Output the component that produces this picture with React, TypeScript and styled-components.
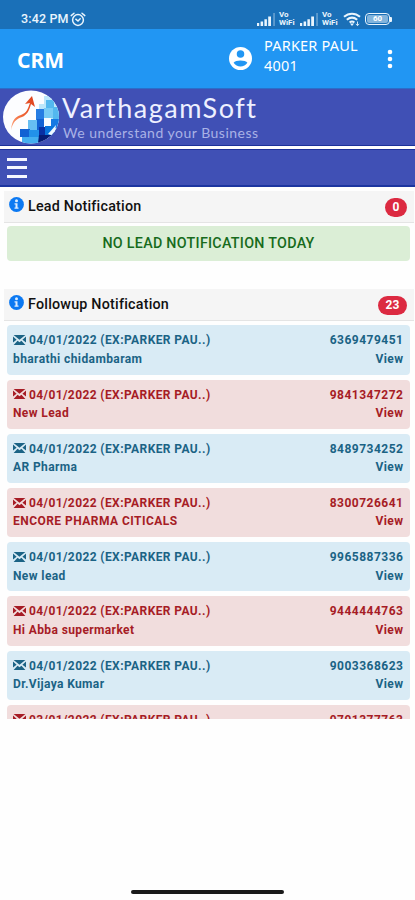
import React from "react";
import styled, { createGlobalStyle } from "styled-components";

const GlobalStyle = createGlobalStyle`
  * { box-sizing: border-box; }
  html, body { margin: 0; padding: 0; background: #fefefe; }
  body { font-family: Roboto, "Liberation Sans", sans-serif; overflow: hidden; }
  svg { display: block; flex: none; }
`;

const Screen = styled.div`
  width: 415px;
  height: 900px;
  display: flex;
  flex-direction: column;
  overflow: hidden;
  background: #fefefe;
`;

const StatusBar = styled.header`
  height: 29px;
  flex: none;
  display: flex;
  align-items: center;
  justify-content: space-between;
  padding: 9px 23px 0 21px;
  background: #1a70b8;
  color: #eaf5fd;
`;

const StatusGroup = styled.div<{ $gap: number }>`
  display: flex;
  align-items: center;
  gap: ${(p) => p.$gap}px;
`;

const Clock = styled.span`
  font: 500 12.5px/16px Roboto, sans-serif;
  letter-spacing: 0.15px;
`;

const Carrier = styled.span`
  display: flex;
  flex-direction: column;
  width: 18px;
  font: 700 8px/8px Roboto, sans-serif;
`;

const AppBar = styled.div`
  height: 60px;
  flex: none;
  display: flex;
  align-items: center;
  padding: 0 22px 0 17px;
  background: #2196f3;
  border-bottom: 1px solid #2a6ecb;
  color: #fff;
`;

const AppTitle = styled.h1`
  margin: 2px 0 0;
  flex: 1;
  font: 700 21px/28px "Noto Sans", sans-serif;
  letter-spacing: 0;
`;

const Account = styled.div`
  width: 119px;
  margin: 0 4px 8px 12px;
  font: 400 14.5px/20px "Noto Sans", sans-serif;
  white-space: nowrap;
`;

const AccountLine = styled.div`
  letter-spacing: 0.2px;
`;

const Brand = styled.div`
  height: 57px;
  flex: none;
  display: flex;
  align-items: center;
  padding-left: 2px;
  background: #4050b5;
  border-bottom: 1px solid #1c319a;
`;

const BrandText = styled.div`
  display: flex;
  flex-direction: column;
  margin-left: 2px;
  font-family: Lato, sans-serif;
  white-space: nowrap;
`;

const BrandName = styled.span`
  font-size: 27px;
  line-height: 32px;
  letter-spacing: 1.5px;
  color: #eef0ff;
`;

const Tagline = styled.span`
  margin-left: 1px;
  font-size: 14px;
  line-height: 18px;
  letter-spacing: 0.5px;
  color: #a9b2e6;
`;

const MenuBar = styled.nav`
  height: 38px;
  flex: none;
  margin-top: 3px;
  display: flex;
  align-items: center;
  padding-left: 7px;
  background: #4050b5;
  border-top: 1px solid #1c319a;
  border-bottom: 2px solid #1c35a0;
`;

const MenuButton = styled.button`
  width: 20px;
  height: 20px;
  padding: 0;
  border: 0;
  background: none;
  display: flex;
  flex-direction: column;
  justify-content: space-between;
`;

const MenuStroke = styled.span`
  height: 3px;
  background: #f5f7ff;
`;

const PanelHead = styled.div<{ $top: number; $height: number }>`
  height: ${(p) => p.$height}px;
  flex: none;
  margin: ${(p) => p.$top}px 1px 0 4px;
  display: flex;
  align-items: center;
  padding: 0 7px 0 5px;
  background: #f5f5f5;
  border-bottom: 1px solid #e4e4e4;
`;

const PanelTitle = styled.h2`
  flex: 1;
  margin: 0 0 1px 4px;
  font: 500 14.3px/20px Roboto, sans-serif;
  letter-spacing: 0.22px;
  color: #111;
`;

const InfoSlot = styled.span`
  margin-bottom: 4px;
`;

const Count = styled.span<{ $width: number }>`
  width: ${(p) => p.$width}px;
  height: 19px;
  margin-top: 1px;
  border-radius: 10px;
  background: #dc2a41;
  color: #fff;
  text-align: center;
  font: 700 12px/19px Roboto, sans-serif;
`;

const EmptyNotice = styled.div`
  height: 35px;
  flex: none;
  margin: 3px 5px 0 7px;
  border-radius: 4px;
  background: #dbeed6;
  color: #176b1c;
  text-align: center;
  font: 500 14.3px/34px Roboto, sans-serif;
  letter-spacing: 0.28px;
`;

const List = styled.main`
  height: 398px;
  flex: none;
  overflow: hidden;
  padding: 4.4px 5px 0 7px;
  display: flex;
  flex-direction: column;
  gap: 4.9px;
`;

const Card = styled.article<{ $tone: "blue" | "red" }>`
  height: 49.3px;
  flex: none;
  padding: 6px 7px 0 6px;
  border-radius: 4px;
  background: ${(p) => (p.$tone === "blue" ? "#d9ebf5" : "#f1dddd")};
  color: ${(p) => (p.$tone === "blue" ? "#1b6385" : "#a61c25")};
  font: 700 12px/18.4px Roboto, sans-serif;
`;

const CardRow = styled.div`
  display: flex;
  align-items: center;
  white-space: nowrap;
`;

const EnvelopeSlot = styled.span`
  margin-bottom: 1px;
`;

const DateText = styled.span`
  margin-left: 3px;
  flex: 1;
  letter-spacing: 0.4px;
`;

const LeadName = styled.span<{ $spacing: number }>`
  flex: 1;
  letter-spacing: ${(p) => p.$spacing}px;
`;

const Phone = styled.span`
  letter-spacing: 0.5px;
  margin-right: -0.5px;
`;

const ViewLink = styled.a`
  letter-spacing: 0.4px;
  margin-right: -0.4px;
`;

const Footer = styled.footer`
  flex: 1;
  display: flex;
  align-items: flex-end;
  justify-content: center;
  padding-bottom: 6px;
`;

const HomeHandle = styled.div`
  width: 153px;
  height: 4px;
  border-radius: 2px;
  background: #1a1a1a;
`;

const AlarmIcon = () => (
  <svg width="16" height="15" viewBox="0 0 16 15" fill="none" stroke="currentColor" strokeWidth="1.5" strokeLinecap="round">
    <circle cx="8" cy="8" r="5.4" />
    <path d="M1.2 3.6 4 1.2M14.8 3.6 12 1.2M5.8 7.2 8 9l2.2-2.2" />
  </svg>
);

const SignalIcon = () => (
  <svg width="19" height="13" viewBox="0 0 19 13" fill="currentColor">
    <path d="M0 10h2.2v3H0zM3.6 8.5h2.5V13H3.6zM7.4 6.2h2.5V13H7.4zM11.2 3.5h2.8V13h-2.8z" />
    <path d="M16.3 0h1.5v13h-1.5z" opacity=".4" />
  </svg>
);

const WifiIcon = () => (
  <svg width="18" height="14" viewBox="0 0 18 14" fill="none" stroke="currentColor" strokeWidth="2">
    <path d="M1 4.8c4.8-4.2 11.2-4.2 16 0M3.8 7.8c3.2-2.7 7.2-2.7 10.4 0M6.6 10.5c1.5-1.2 3.3-1.2 4.8 0" />
    <path d="m9 14-2-2.4h4z" fill="currentColor" stroke="none" />
    <path d="M14.5 9.5v4M12.8 12l1.7 1.5 1.7-1.5" strokeWidth=".9" />
  </svg>
);

const Battery = styled.span`
  display: flex;
  align-items: center;
  margin-left: 1px;
  &::after {
    content: "";
    width: 2px;
    height: 5px;
    background: #eaf5fd;
    border-radius: 0 1px 1px 0;
  }
`;

const BatteryCell = styled.span`
  width: 25px;
  height: 12px;
  border: 1.5px solid #eaf5fd;
  border-radius: 4px;
  padding: 1px;
  display: flex;
`;

const BatteryLevel = styled.span`
  flex: 1;
  border-radius: 2px;
  background: #82b4dc;
  color: #fff;
  font: 700 8px/8px Roboto, sans-serif;
  text-align: center;
`;

const ProfileIcon = () => (
  <svg width="23" height="23" viewBox="0 0 24 24">
    <circle cx="12" cy="12" r="12" fill="#fff" />
    <circle cx="12" cy="7.4" r="3.9" fill="#2196f3" />
    <path d="M4.8 16.4C6.8 13.4 17.2 13.4 19.2 16.4 16.2 21.5 7.8 21.5 4.8 16.4z" fill="#2196f3" />
  </svg>
);

const MoreIcon = () => (
  <svg width="6" height="20" viewBox="0 0 6 20" fill="#fff">
    <circle cx="3" cy="3" r="2.3" />
    <circle cx="3" cy="10" r="2.3" />
    <circle cx="3" cy="17" r="2.3" />
  </svg>
);

const InfoIcon = () => (
  <svg width="15" height="15" viewBox="0 0 15 15">
    <circle cx="7.5" cy="7.5" r="7.4" fill="#0c79f2" />
    <circle cx="7.5" cy="3.8" r="1.5" fill="#dcecff" />
    <path d="M5.5 6.2h3v4.3h1v1.3h-4v-1.3h1V7.5h-1z" fill="#dcecff" />
  </svg>
);

const EnvelopeIcon = () => (
  <svg width="13" height="10" viewBox="0 0 13 10">
    <path d="M.6 0h11.8L6.5 4.8zM0 1.4 3.6 4.7 0 7.6zM13 1.4 9.4 4.7 13 7.6zM.6 10l4-4.3 1.9 1.6 1.9-1.6 4 4.3z" fill="currentColor" />
  </svg>
);

const GlobeLogo = () => (
  <svg width="58" height="54" viewBox="0 0 58 54">
    <defs>
      <clipPath id="globe"><ellipse cx="29" cy="27" rx="28" ry="26.5" /></clipPath>
      <linearGradient id="arrow" x1="0" y1="1" x2="1" y2="0">
        <stop offset="0" stopColor="#ffac86" />
        <stop offset=".45" stopColor="#ef6535" />
        <stop offset="1" stopColor="#dc3e1a" />
      </linearGradient>
    </defs>
    <g clipPath="url(#globe)">
      <path d="M0 0h58v54H0z" fill="#fcfdff" />
      <path d="M42 6h16v48H45V30h-8V14h5z" fill="#bce7fb" />
      <path d="M44 10h8v9h-8zM51 17h7v14h-7z" fill="#53b8ef" />
      <path d="M34 19h9v12h-9z" fill="#267de3" />
      <path d="M42 18h9v10h-9z" fill="#77cbf5" />
      <path d="M26 30h9v11h-9z" fill="#66bef2" />
      <path d="M35 29h7v11h-7zM18 39h10v8H18z" fill="#1262d3" />
      <path d="M42 28h7v9h-7z" fill="#f7fcff" />
      <path d="M49 29h8v9h-8z" fill="#157ae3" />
      <path d="M27 40h10v9H27z" fill="#2291e9" />
      <path d="M37 37h7v9h-7z" fill="#0830a4" />
      <path d="M43 36h9v10h-9z" fill="#0874dc" />
      <path d="M46 44 54 35l-2 11z" fill="#eef9ff" />
      <path d="M20 47h9v8h-9zM29 47h8v7h-8z" fill="#44aff0" />
      <path d="M37 45h15l-8 8h-8z" fill="#061c75" />
      <path d="M9 40C10 30 13 27 19 25c6-2 7-7 9-12l-5 1 7-8 3 11-4-3c-2 7-4 11-9 13-6 2-9 5-11 13z" fill="url(#arrow)" />
    </g>
  </svg>
);

const leads: { name: string; phone: string; spacing: number; date?: string }[] = [
  { name: "bharathi chidambaram", phone: "6369479451", spacing: 0.4 },
  { name: "New Lead", phone: "9841347272", spacing: 0.4 },
  { name: "AR Pharma", phone: "8489734252", spacing: 0.4 },
  { name: "ENCORE PHARMA CITICALS", phone: "8300726641", spacing: 0.46 },
  { name: "New lead", phone: "9965887336", spacing: 0.4 },
  { name: "Hi Abba supermarket", phone: "9444444763", spacing: 0.38 },
  { name: "Dr.Vijaya Kumar", phone: "9003368623", spacing: 0.36 },
  { name: "", phone: "9791377763", spacing: 0.2, date: "03/01/2022" },
];

export default function App() {
  return (
    <Screen>
      <GlobalStyle />
      <StatusBar>
        <StatusGroup $gap={1}>
          <Clock>3:42 PM</Clock>
          <AlarmIcon />
        </StatusGroup>
        <StatusGroup $gap={3}>
          <SignalIcon />
          <Carrier><span>Vo</span><span>WiFi</span></Carrier>
          <SignalIcon />
          <Carrier><span>Vo</span><span>WiFi</span></Carrier>
          <WifiIcon />
          <Battery><BatteryCell><BatteryLevel>60</BatteryLevel></BatteryCell></Battery>
        </StatusGroup>
      </StatusBar>
      <AppBar>
        <AppTitle>CRM</AppTitle>
        <ProfileIcon />
        <Account>
          <AccountLine>PARKER PAUL</AccountLine>
          <AccountLine>4001</AccountLine>
        </Account>
        <MoreIcon />
      </AppBar>
      <Brand>
        <GlobeLogo />
        <BrandText>
          <BrandName>VarthagamSoft</BrandName>
          <Tagline>We understand your Business</Tagline>
        </BrandText>
      </Brand>
      <MenuBar>
        <MenuButton aria-label="Menu"><MenuStroke /><MenuStroke /><MenuStroke /></MenuButton>
      </MenuBar>
      <PanelHead $top={4} $height={32}>
        <InfoSlot><InfoIcon /></InfoSlot>
        <PanelTitle>Lead Notification</PanelTitle>
        <Count $width={22}>0</Count>
      </PanelHead>
      <EmptyNotice>NO LEAD NOTIFICATION TODAY</EmptyNotice>
      <PanelHead $top={28} $height={32}>
        <InfoSlot><InfoIcon /></InfoSlot>
        <PanelTitle>Followup Notification</PanelTitle>
        <Count $width={29}>23</Count>
      </PanelHead>
      <List>
        {leads.map((lead, i) => (
          <Card key={lead.phone} $tone={i % 2 ? "red" : "blue"}>
            <CardRow>
              <EnvelopeSlot><EnvelopeIcon /></EnvelopeSlot>
              <DateText>{lead.date ?? "04/01/2022"} (EX:PARKER PAU..)</DateText>
              <Phone>{lead.phone}</Phone>
            </CardRow>
            {lead.name && (
              <CardRow>
                <LeadName $spacing={lead.spacing}>{lead.name}</LeadName>
                <ViewLink>View</ViewLink>
              </CardRow>
            )}
          </Card>
        ))}
      </List>
      <Footer><HomeHandle /></Footer>
    </Screen>
  );
}
